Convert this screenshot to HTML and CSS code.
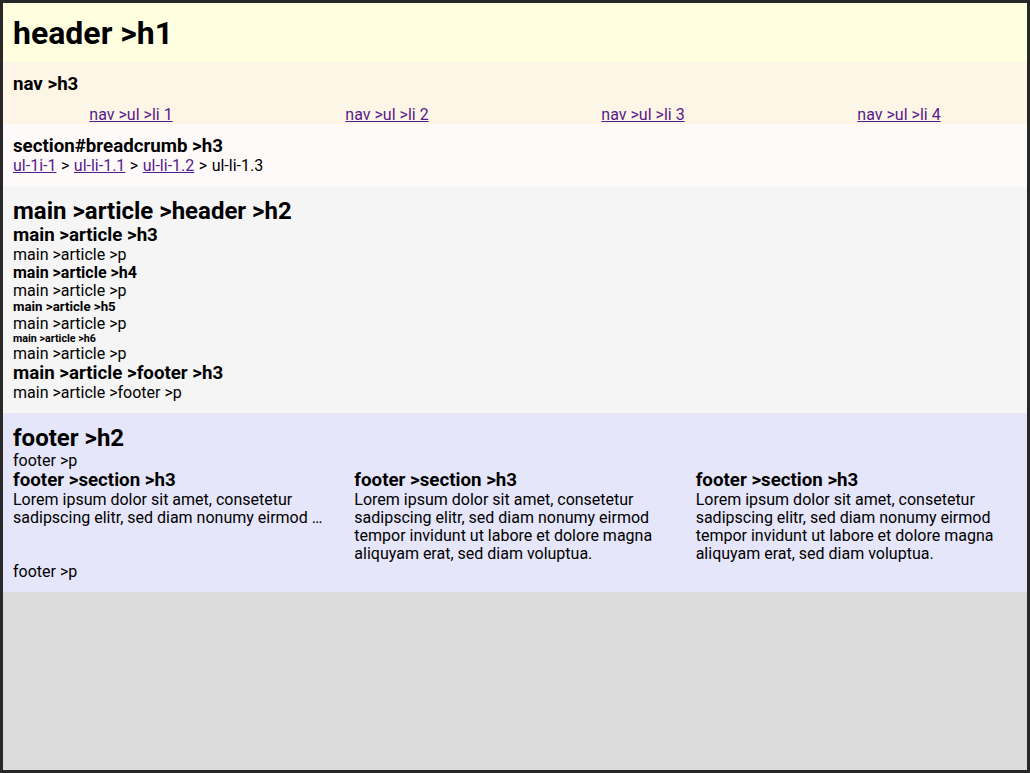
FILE: index.html
```html
<!DOCTYPE html>
<html lang="en">
<head>
<meta charset="utf-8">
<title>Layout</title>
<link rel="stylesheet" href="styles.css">
</head>
<body>
<header class="site-header"><h1>header &gt;h1</h1></header>
<nav class="site-nav">
  <h3>nav &gt;h3</h3>
  <ul class="nav-list">
    <li><a href="#">nav &gt;ul &gt;li 1</a></li>
    <li><a href="#">nav &gt;ul &gt;li 2</a></li>
    <li><a href="#">nav &gt;ul &gt;li 3</a></li>
    <li><a href="#">nav &gt;ul &gt;li 4</a></li>
  </ul>
</nav>
<section class="breadcrumb" id="breadcrumb">
  <h3>section#breadcrumb &gt;h3</h3>
  <ul class="crumbs">
    <li><a href="#">ul-1i-1</a></li>
    <li><a href="#">ul-li-1.1</a></li>
    <li><a href="#">ul-li-1.2</a></li>
    <li>ul-li-1.3</li>
  </ul>
</section>
<main class="site-main">
  <article class="article">
    <header><h2>main &gt;article &gt;header &gt;h2</h2></header>
    <h3>main &gt;article &gt;h3</h3>
    <p>main &gt;article &gt;p</p>
    <h4>main &gt;article &gt;h4</h4>
    <p>main &gt;article &gt;p</p>
    <h5>main &gt;article &gt;h5</h5>
    <p>main &gt;article &gt;p</p>
    <h6>main &gt;article &gt;h6</h6>
    <p>main &gt;article &gt;p</p>
    <footer>
      <h3>main &gt;article &gt;footer &gt;h3</h3>
      <p>main &gt;article &gt;footer &gt;p</p>
    </footer>
  </article>
</main>
<footer class="site-footer">
  <h2>footer &gt;h2</h2>
  <p>footer &gt;p</p>
  <div class="footer-cols">
    <section class="footer-col">
      <h3>footer &gt;section &gt;h3</h3>
      <p>Lorem ipsum dolor sit amet, consetetur sadipscing elitr, sed diam nonumy eirmod …</p>
    </section>
    <section class="footer-col">
      <h3>footer &gt;section &gt;h3</h3>
      <p>Lorem ipsum dolor sit amet, consetetur sadipscing elitr, sed diam nonumy eirmod tempor invidunt ut labore et dolore magna aliquyam erat, sed diam voluptua.</p>
    </section>
    <section class="footer-col">
      <h3>footer &gt;section &gt;h3</h3>
      <p>Lorem ipsum dolor sit amet, consetetur sadipscing elitr, sed diam nonumy eirmod tempor invidunt ut labore et dolore magna aliquyam erat, sed diam voluptua.</p>
    </section>
  </div>
  <p>footer &gt;p</p>
</footer>
</body>
</html>
```

FILE: styles.css
```css
* { box-sizing: border-box; }
html, body { margin: 0; padding: 0; }
body {
  font-family: Roboto, "Liberation Sans", sans-serif;
  font-size: 16px;
  line-height: 1.125;
  color: #000;
  background: #dcdcdc;
  border: 3px solid #282828;
  min-height: 100vh;
}
h1, h2, h3, h4, h5, h6, p, ul { margin: 0; }
a { color: #551a8b; }

.site-header { background: #ffffe0; padding: 11.5px 10px; }
.site-header h1 { font-size: 32px; }

.site-nav { background: #fdf5e6; padding: 11.5px 0 0; }
.site-nav h3 { font-size: 18.72px; padding: 0 10px; }
.nav-list {
  list-style: none; padding: 0; margin-top: 11.5px;
  display: grid; grid-template-columns: repeat(4, 1fr);
  text-align: center;
}

.breadcrumb { background: #fffafa; padding: 11.5px 10px; }
.breadcrumb h3 { font-size: 18.72px; }
.crumbs { list-style: none; padding: 0; display: flex; }
.crumbs li + li::before { content: ">"; padding: 0 4.5px; }

.site-main { background: #f5f5f5; padding: 11.5px 10px; }
.article h2 { font-size: 24px; }
.article h3 { font-size: 18.72px; }
.article h4 { font-size: 16px; }
.article h5 { font-size: 13.28px; }
.article h6 { font-size: 10.72px; }

.site-footer { background: #e6e6fa; padding: 11.5px 10px; }
.site-footer h2 { font-size: 24px; }
.site-footer h3 { font-size: 18.72px; }
.footer-cols {
  display: grid; grid-template-columns: repeat(3, 1fr); gap: 20px;
}
```
